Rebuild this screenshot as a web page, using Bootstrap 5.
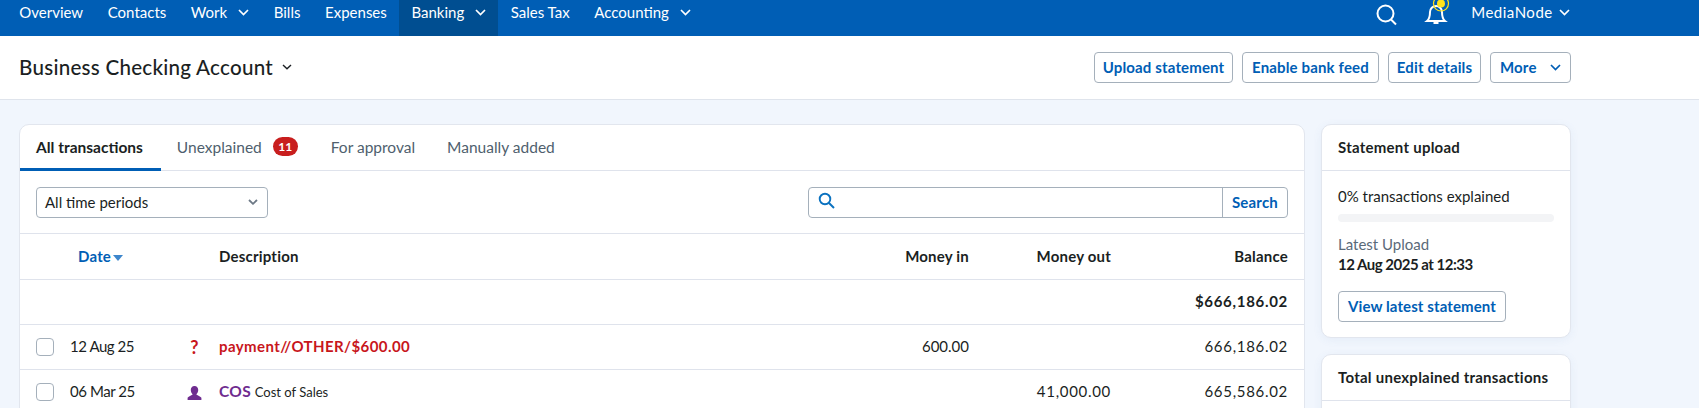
<!doctype html>
<html lang="en">
<head>
<meta charset="utf-8">
<title>Business Checking Account</title>
<link href="https://cdn.jsdelivr.net/npm/bootstrap@5.3.0/dist/css/bootstrap.min.css" rel="stylesheet">
<style>
html,body{height:408px;overflow:hidden}
body{background:#f1f6fd;font-family:Lato,"Liberation Sans",sans-serif;font-size:15px;color:#1b1f23}
.topbar{height:36px;background:#005eb5;padding:0 7px;color:#fff}
.topbar .nav-link{color:#fff;padding:0 12.300px;height:36px;line-height:25px;font-size:15px;display:flex;align-items:flex-start;gap:11px}
.topbar .nav-link.active-tab{background:#004e91}
.chev{width:11px;height:7px;flex:none;margin-top:9px}
.top-right{margin-right:110px}
.search-ico{margin:4px 22px 0 0}
.bell-ico{margin-right:8px}
.topbar .nav-link.user-link{gap:6px;letter-spacing:.5px}
.account-name{font-size:20.600px;font-weight:500;letter-spacing:.25px;margin:0;gap:9px}
.subhead{height:64px;background:#fff;border-bottom:1px solid #dfe4ec;padding:0 128px 0 19px}
.btn-group-row{gap:9px}
.act-btn{height:31px;padding:0;font-size:15px;font-weight:700;letter-spacing:.15px;color:#005eb5;background:#fff;border:1px solid #a5b0bb;border-radius:4px;line-height:29px}
.act-btn:hover{color:#005eb5;background:#fff;border-color:#a5b0bb}
.btn-upload{width:139px}
.btn-feed{width:137px}
.btn-edit{width:93px}
.btn-more{width:81px;padding:0 9px;justify-content:space-between}
.more-chev{margin-top:11px}
.page-wrap{padding:24px 128px 0 19px;gap:16px;height:308px;overflow:hidden}
.main-panel{flex:0 0 1286px;border:1px solid #e2e6ee;border-radius:10px;background:#fff;height:300px;overflow:hidden}
.side-col{flex:0 0 250px;gap:16px}
.tabs-row{height:46px;border-bottom:1px solid #dfe3ec;font-size:15.500px}
.tab-item{height:46px;padding:0 16px;color:#4f5f6e;line-height:44px;display:flex;align-items:flex-start;gap:11px}
.tab-item.on{color:#1b1f23;font-weight:700;border-bottom:3px solid #005eb5;padding-right:18px}
.count-pill{background:#c81e1e;color:#fff;font-size:12px;font-weight:700;border-radius:10px;width:25px;height:19px;line-height:19px;text-align:center;margin:12px 1px 0 0}
.filter-row{height:63px;border-bottom:1px solid #dfe3ec;padding:0 16px}
.period-select{width:232px;height:31px;border:1px solid #a5b0bb;border-radius:4px;font-size:15px;padding:0 9px 0 8px;color:#1b1f23}
.search-box{width:480px;height:31px;border:1px solid #a5b0bb;border-radius:4px;overflow:hidden}
.search-field{flex:1;padding:0 9px}
.search-go{border-left:1px solid #a5b0bb;width:65px;text-align:center;color:#005eb5;font-weight:700;line-height:29px;letter-spacing:.2px}
.tx-table{table-layout:fixed;width:100%;margin:0;font-size:15px}
.tx-table td,.tx-table th{height:45px;padding:0;vertical-align:middle;border-bottom:1px solid #dfe3ec;white-space:nowrap;color:#1b1f23}
.tx-table th{font-weight:700;letter-spacing:.2px}
.date-head{color:#005eb5!important;padding-left:58px!important}
.sort-tri{display:inline-block;width:0;height:0;border:5.500px solid transparent;border-top:6px solid #3d86cc;border-bottom:0;margin-left:2px;vertical-align:middle}
.tick{width:18px;height:18px;border:1px solid #a5b0bb;border-radius:4px;margin-left:16px;background:#fff;display:block}
.date-cell{letter-spacing:-.45px}
.amount-wide{letter-spacing:.7px}
.tx-table td.icon-q{color:#c8161c;font-weight:700;font-size:18px;text-align:center;line-height:1}
.tx-table td.red-text{color:#c8161c;font-weight:700;letter-spacing:.42px}
.purple-text{color:#6f2c8f;font-weight:700;letter-spacing:.3px;font-size:15.500px}
.small-desc{font-size:13px}
.side-box{border:1px solid #e2e6ee;border-radius:10px;background:#fff;box-shadow:0 2px 10px rgba(70,110,180,.07)}
.side-head{height:46px;line-height:44px;padding:0 16px;font-weight:700;letter-spacing:.25px;border-bottom:1px solid #dfe3ec}
.side-body{padding:14px 16px 15px}
.progress-track{height:8px;background:#f3f4f6;border-radius:4px;margin:6px 0 12px}
.muted-label{color:#5a6a79;line-height:20px}
.strong-line{font-weight:700;line-height:20px;margin-bottom:17px;letter-spacing:-.5px}
.side-body .act-btn{letter-spacing:.1px;padding:0 9px}
</style>
</head>
<body>
<nav class="topbar d-flex justify-content-between">
<ul class="nav flex-nowrap">
<li class="nav-item"><a class="nav-link" href="#">Overview</a></li>
<li class="nav-item"><a class="nav-link" href="#">Contacts</a></li>
<li class="nav-item"><a class="nav-link" href="#">Work <svg class="chev" viewBox="0 0 11 7"><path d="M1 1l4.500 4.500L10 1" fill="none" stroke="#fff" stroke-width="1.700"/></svg></a></li>
<li class="nav-item"><a class="nav-link" href="#">Bills</a></li>
<li class="nav-item"><a class="nav-link" href="#">Expenses</a></li>
<li class="nav-item"><a class="nav-link active-tab" href="#">Banking <svg class="chev" viewBox="0 0 11 7"><path d="M1 1l4.500 4.500L10 1" fill="none" stroke="#fff" stroke-width="1.700"/></svg></a></li>
<li class="nav-item"><a class="nav-link" href="#">Sales Tax</a></li>
<li class="nav-item"><a class="nav-link" href="#">Accounting <svg class="chev" viewBox="0 0 11 7"><path d="M1 1l4.500 4.500L10 1" fill="none" stroke="#fff" stroke-width="1.700"/></svg></a></li>
</ul>
<div class="d-flex top-right">
<svg class="search-ico" width="24" height="24" viewBox="0 0 24 24"><circle cx="10.500" cy="9.500" r="8" fill="none" stroke="#fff" stroke-width="2"/><path d="M16 15.500l5 5" stroke="#fff" stroke-width="2"/></svg>
<svg class="bell-ico" width="30" height="26" viewBox="0 0 30 26"><path d="M6 21c2.500-2 3-4.500 3-9 0-3.500 2.700-6 6-6s6 2.500 6 6c0 4.500.5 7 3 9z" fill="none" stroke="#fff" stroke-width="2"/><path d="M12.500 23h5" stroke="#fff" stroke-width="2"/><circle cx="20" cy="3.500" r="4" fill="#ffe21a"/><circle cx="20" cy="3.500" r="7.500" fill="none" stroke="#ffe21a" stroke-width="1.200"/></svg>
<a class="nav-link user-link" href="#">MediaNode <svg class="chev" viewBox="0 0 11 7"><path d="M1 1l4.500 4.500L10 1" fill="none" stroke="#fff" stroke-width="1.700"/></svg></a>
</div>
</nav>
<header class="subhead d-flex justify-content-between align-items-center">
<h1 class="account-name d-flex align-items-center">Business Checking Account <svg width="10" height="6" viewBox="0 0 10 6"><path d="M1 1l4 3.800L9 1" fill="none" stroke="#1b1f23" stroke-width="1.400"/></svg></h1>
<div class="d-flex btn-group-row">
<a class="btn act-btn btn-upload" href="#">Upload statement</a>
<a class="btn act-btn btn-feed" href="#">Enable bank feed</a>
<a class="btn act-btn btn-edit" href="#">Edit details</a>
<a class="btn act-btn btn-more d-flex" href="#">More <svg class="chev more-chev" viewBox="0 0 11 7"><path d="M1 1l4.500 4.500L10 1" fill="none" stroke="#005eb5" stroke-width="1.700"/></svg></a>
</div>
</header>
<div class="page-wrap d-flex align-items-start">
<main class="main-panel">
<div class="tabs-row d-flex">
<div class="tab-item on">All transactions</div>
<div class="tab-item">Unexplained <span class="count-pill">11</span></div>
<div class="tab-item">For approval</div>
<div class="tab-item">Manually added</div>
</div>
<div class="filter-row d-flex justify-content-between align-items-center">
<div class="period-select d-flex justify-content-between align-items-center">All time periods <svg width="10" height="6" viewBox="0 0 10 6"><path d="M1 1l4 3.800L9 1" fill="none" stroke="#6d7986" stroke-width="1.800"/></svg></div>
<div class="search-box d-flex">
<div class="search-field"><svg width="17" height="17" viewBox="0 0 17 17"><circle cx="7" cy="7" r="5.300" fill="none" stroke="#0b72c0" stroke-width="1.900"/><path d="M11 11l5 5" stroke="#0b72c0" stroke-width="1.900"/></svg></div>
<div class="search-go">Search</div>
</div>
</div>
<table class="table tx-table">
<colgroup><col style="width:50px"><col style="width:100px"><col style="width:49px"><col><col style="width:140px"><col style="width:142px"><col style="width:193px"></colgroup>
<thead><tr><th colspan="2" class="date-head">Date<span class="sort-tri"></span></th><th></th><th>Description</th><th class="text-end">Money in</th><th class="text-end">Money out</th><th class="text-end pe-3">Balance</th></tr></thead>
<tbody>
<tr><td colspan="6"></td><td class="text-end pe-3 fw-bold amount-wide">$666,186.02</td></tr>
<tr><td><span class="tick"></span></td><td class="date-cell">12 Aug 25</td><td class="icon-q">?</td><td class="red-text">payment//OTHER/$600.00</td><td class="text-end">600.00</td><td></td><td class="text-end pe-3 amount-wide">666,186.02</td></tr>
<tr><td><span class="tick"></span></td><td class="date-cell">06 Mar 25</td><td class="text-center"><svg width="17" height="17" viewBox="0 0 16 16"><path d="M8 1c2.300 0 3.500 1.700 3.500 3.800 0 1.700-.8 3.200-1.800 4 .2.900 3.800 1.700 4.800 3.300V14H1.500v-1.900c1-1.600 4.600-2.400 4.800-3.300-1-.8-1.800-2.300-1.800-4C4.500 2.700 5.700 1 8 1z" fill="#6f2c8f"/></svg></td><td><span class="purple-text">COS</span> <span class="small-desc">Cost of Sales</span></td><td></td><td class="text-end amount-wide">41,000.00</td><td class="text-end pe-3 amount-wide">665,586.02</td></tr>
</tbody>
</table>
</main>
<aside class="side-col d-flex flex-column">
<section class="side-box">
<div class="side-head">Statement upload</div>
<div class="side-body">
<div>0% transactions explained</div>
<div class="progress-track"></div>
<div class="muted-label">Latest Upload</div>
<div class="strong-line">12 Aug 2025 at 12:33</div>
<a class="btn act-btn" href="#">View latest statement</a>
</div>
</section>
<section class="side-box">
<div class="side-head">Total unexplained transactions</div>
<div class="side-body"></div>
</section>
</aside>
</div>
<script src="https://cdn.jsdelivr.net/npm/bootstrap@5.3.0/dist/js/bootstrap.bundle.min.js"></script>
</body>
</html>
